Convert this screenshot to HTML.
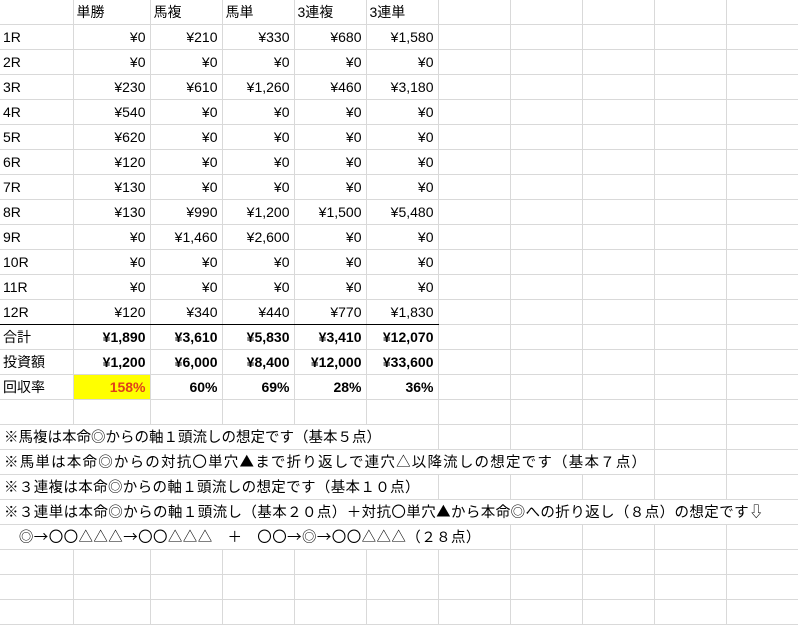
<!DOCTYPE html>
<html><head><meta charset="utf-8"><style>
body{margin:0;background:#fff;width:798px;height:626px;overflow:hidden;font-family:"Liberation Sans","Noto Sans CJK JP",sans-serif;font-size:14px;color:#000}
table{border-collapse:collapse;table-layout:fixed;width:798px}
td{height:24px;border-right:1px solid #d9d9d9;border-bottom:1px solid #d9d9d9;padding:0 3px;white-space:nowrap;overflow:visible;line-height:24px}
td.r{text-align:right;padding-right:4px}
tr.t td{border-bottom:1.5px solid #000}
tr.t td:nth-child(n+7){border-bottom:1px solid #d9d9d9}
.b{font-weight:bold}
.y{background:#ffff00;color:#e0401a}
td.n{font-family:"Noto Sans CJK JP",sans-serif;font-size:14.5px;padding-left:4px}
</style></head><body>
<table>
<colgroup><col style="width:73px"><col style="width:77px"><col style="width:72px"><col style="width:72px"><col style="width:72px"><col style="width:72px"><col style="width:72px"><col style="width:72px"><col style="width:72px"><col style="width:72px"><col style="width:72px"></colgroup>
<tr><td></td><td>単勝</td><td>馬複</td><td>馬単</td><td>3連複</td><td>3連単</td><td></td><td></td><td></td><td></td><td></td></tr>
<tr><td>1R</td><td class="r">¥0</td><td class="r">¥210</td><td class="r">¥330</td><td class="r">¥680</td><td class="r">¥1,580</td><td></td><td></td><td></td><td></td><td></td></tr>
<tr><td>2R</td><td class="r">¥0</td><td class="r">¥0</td><td class="r">¥0</td><td class="r">¥0</td><td class="r">¥0</td><td></td><td></td><td></td><td></td><td></td></tr>
<tr><td>3R</td><td class="r">¥230</td><td class="r">¥610</td><td class="r">¥1,260</td><td class="r">¥460</td><td class="r">¥3,180</td><td></td><td></td><td></td><td></td><td></td></tr>
<tr><td>4R</td><td class="r">¥540</td><td class="r">¥0</td><td class="r">¥0</td><td class="r">¥0</td><td class="r">¥0</td><td></td><td></td><td></td><td></td><td></td></tr>
<tr><td>5R</td><td class="r">¥620</td><td class="r">¥0</td><td class="r">¥0</td><td class="r">¥0</td><td class="r">¥0</td><td></td><td></td><td></td><td></td><td></td></tr>
<tr><td>6R</td><td class="r">¥120</td><td class="r">¥0</td><td class="r">¥0</td><td class="r">¥0</td><td class="r">¥0</td><td></td><td></td><td></td><td></td><td></td></tr>
<tr><td>7R</td><td class="r">¥130</td><td class="r">¥0</td><td class="r">¥0</td><td class="r">¥0</td><td class="r">¥0</td><td></td><td></td><td></td><td></td><td></td></tr>
<tr><td>8R</td><td class="r">¥130</td><td class="r">¥990</td><td class="r">¥1,200</td><td class="r">¥1,500</td><td class="r">¥5,480</td><td></td><td></td><td></td><td></td><td></td></tr>
<tr><td>9R</td><td class="r">¥0</td><td class="r">¥1,460</td><td class="r">¥2,600</td><td class="r">¥0</td><td class="r">¥0</td><td></td><td></td><td></td><td></td><td></td></tr>
<tr><td>10R</td><td class="r">¥0</td><td class="r">¥0</td><td class="r">¥0</td><td class="r">¥0</td><td class="r">¥0</td><td></td><td></td><td></td><td></td><td></td></tr>
<tr><td>11R</td><td class="r">¥0</td><td class="r">¥0</td><td class="r">¥0</td><td class="r">¥0</td><td class="r">¥0</td><td></td><td></td><td></td><td></td><td></td></tr>
<tr class="t"><td>12R</td><td class="r">¥120</td><td class="r">¥340</td><td class="r">¥440</td><td class="r">¥770</td><td class="r">¥1,830</td><td></td><td></td><td></td><td></td><td></td></tr>
<tr><td>合計</td><td class="r b">¥1,890</td><td class="r b">¥3,610</td><td class="r b">¥5,830</td><td class="r b">¥3,410</td><td class="r b">¥12,070</td><td></td><td></td><td></td><td></td><td></td></tr>
<tr><td>投資額</td><td class="r b">¥1,200</td><td class="r b">¥6,000</td><td class="r b">¥8,400</td><td class="r b">¥12,000</td><td class="r b">¥33,600</td><td></td><td></td><td></td><td></td><td></td></tr>
<tr><td>回収率</td><td class="r b y">158%</td><td class="r b">60%</td><td class="r b">69%</td><td class="r b">28%</td><td class="r b">36%</td><td></td><td></td><td></td><td></td><td></td></tr>
<tr><td></td><td></td><td></td><td></td><td></td><td></td><td></td><td></td><td></td><td></td><td></td></tr>
<tr><td class="n" colspan="6">※馬複は本命◎からの軸１頭流しの想定です（基本５点）</td><td></td><td></td><td></td><td></td><td></td></tr>
<tr><td class="n" colspan="9" style="letter-spacing:1.2px">※馬単は本命◎からの対抗〇単穴▲まで折り返しで連穴△以降流しの想定です（基本７点）</td><td></td><td></td></tr>
<tr><td class="n" colspan="6" style="letter-spacing:0.35px">※３連複は本命◎からの軸１頭流しの想定です（基本１０点）</td><td></td><td></td><td></td><td></td><td></td></tr>
<tr><td class="n" colspan="11" style="letter-spacing:0.4px">※３連単は本命◎からの軸１頭流し（基本２０点）＋対抗〇単穴▲から本命◎への折り返し（８点）の想定です⇩</td></tr>
<tr><td class="n" colspan="7" style="letter-spacing:0.4px">　◎→〇〇△△△→〇〇△△△　＋　〇〇→◎→〇〇△△△（２８点）</td><td></td><td></td><td></td><td></td></tr>
<tr><td></td><td></td><td></td><td></td><td></td><td></td><td></td><td></td><td></td><td></td><td></td></tr>
<tr><td></td><td></td><td></td><td></td><td></td><td></td><td></td><td></td><td></td><td></td><td></td></tr>
<tr><td></td><td></td><td></td><td></td><td></td><td></td><td></td><td></td><td></td><td></td><td></td></tr>
</table>
</body></html>
